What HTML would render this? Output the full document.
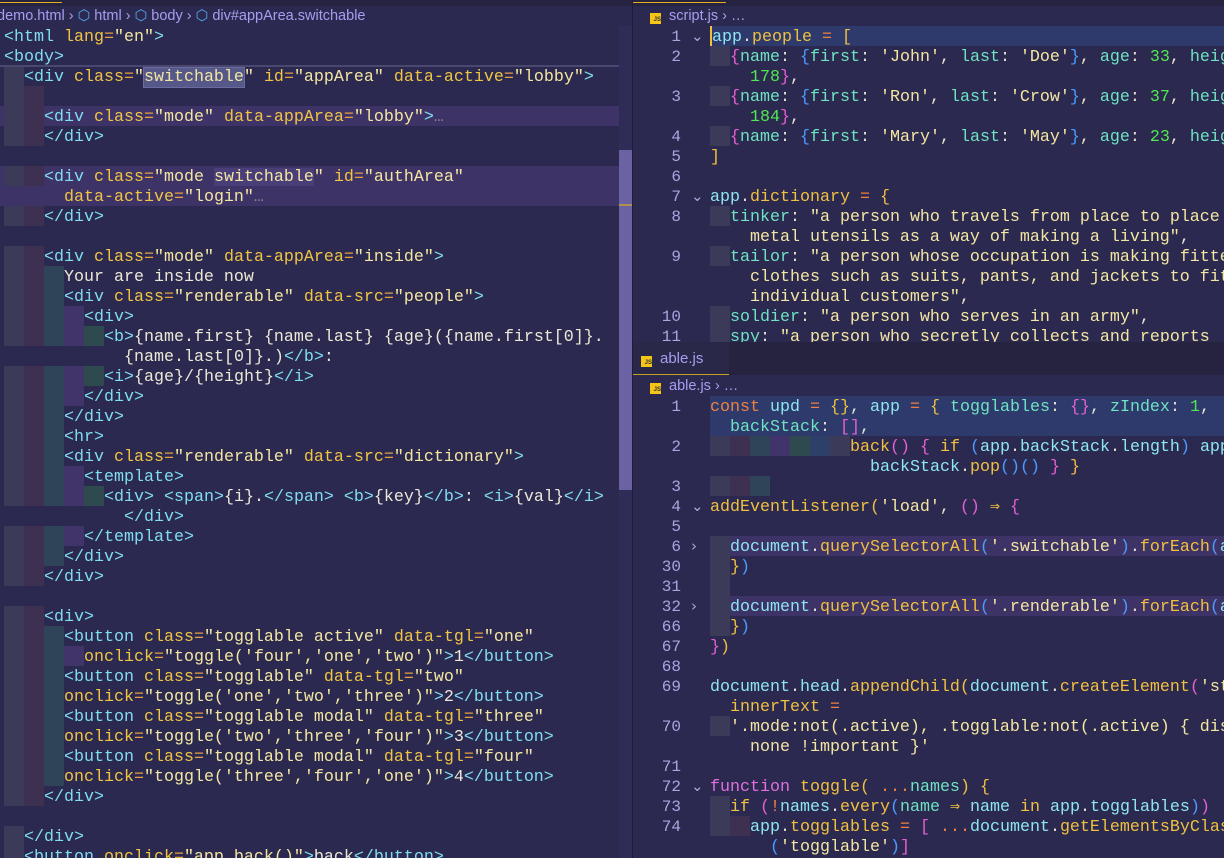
<!DOCTYPE html>
<html><head><meta charset="utf-8">
<style>
*{margin:0;padding:0;box-sizing:border-box}
body{width:1224px;height:858px;overflow:hidden;background:#2b2950;position:relative;font-family:"Liberation Mono",monospace;font-size:16.67px;color:#e8e4d0}
.pane{position:absolute;overflow:hidden}
.l{position:absolute;left:0;height:20px;line-height:23px;white-space:pre;width:2000px}
.g{display:inline-block;width:20px;height:20px;vertical-align:top}
.g1{background:#3b3a58}.g2{background:#3e3050}.g3{background:#2f4458}.g4{background:#40346a}.g5{background:#2e4a4e}.g6{background:#2e3f6a}
.hp{background:#3e3366}.hb{background:#2d3a6b}
.t{color:#80def0}.a{color:#f0c544}.s{color:#f3e6a2}.e{color:#e8a040}.w{color:#ece8d6}
.v{color:#8ee6f0}.k{color:#6fe3c2}.f{color:#f0c040}.p{color:#e65fd0}.bl{color:#4a9cff}.y{color:#f0c040}.n{color:#52e852}.o{color:#f08040}.q{color:#f3e6a2}.pk{color:#e070e0}
.crumb{position:absolute;font-family:"Liberation Sans",sans-serif;font-size:14.5px;color:#a89ef0;white-space:pre;line-height:20px}
.num{position:absolute;left:633px;width:48px;text-align:right;color:#a9a6e0;font-size:16px;line-height:23px}
.chev{position:absolute;left:691px;color:#a9a6e0;font-size:15px;line-height:20px;font-family:"DejaVu Sans",sans-serif}
.js{display:inline-block;width:11px;height:11px;background:#f5c518;color:#333;font-size:6px;line-height:14px;text-align:right;font-weight:bold;vertical-align:-1px;margin-right:8px;font-family:"Liberation Sans",sans-serif}
</style></head><body>

<!-- LEFT PANE -->
<div style="position:absolute;left:0;top:0;width:633px;height:6px;background:#25233f"></div>
<div style="position:absolute;left:0;top:2px;width:62px;height:1px;background:#e0b020"></div>
<div class="crumb" style="left:-3px;top:6px">demo.html <span style="color:#a89ef0">›</span> <span style="color:#5aa8f0">⬡</span> html › <span style="color:#5aa8f0">⬡</span> body › <span style="color:#5aa8f0">⬡</span> div#appArea.switchable</div>
<div style="position:absolute;left:619px;top:26px;width:14px;height:832px;background:#2f2d57"></div>
<div style="position:absolute;left:619px;top:150px;width:14px;height:340px;background:#6a62a2"></div>
<div style="position:absolute;left:619px;top:204px;width:14px;height:2px;background:#b09050"></div>

<div class="pane" style="left:0;top:26px;width:619px;height:832px">
<div style="position:absolute;top:0;left:4px">
<div class="l" style="top:0"><span class="t">&lt;html</span> <span class="a">lang</span><span class="e">=</span><span class="s">"en"</span><span class="t">&gt;</span></div>
<div class="l" style="top:20px"><span class="t">&lt;body&gt;</span></div>
<div class="l" style="top:40px"><b class="g g1"></b><span class="t">&lt;div</span> <span class="a">class</span><span class="e">=</span><span class="s">"<span style="background:#56588a;outline:1px solid #6a6ca0">switchable</span>"</span> <span class="a">id</span><span class="e">=</span><span class="s">"appArea"</span> <span class="a">data-active</span><span class="e">=</span><span class="s">"lobby"</span><span class="t">&gt;</span></div>
<div class="l" style="top:60px"><b class="g g1"></b><b class="g g2"></b></div>
<div class="l hp" style="top:80px;left:-4px;padding-left:4px"><b class="g g1"></b><b class="g g2"></b><span class="t">&lt;div</span> <span class="a">class</span><span class="e">=</span><span class="s">"mode"</span> <span class="a">data-appArea</span><span class="e">=</span><span class="s">"lobby"</span><span class="t">&gt;</span><span style="color:#888">…</span></div>
<div class="l" style="top:100px"><b class="g g1"></b><b class="g g2"></b><span class="t">&lt;/div&gt;</span></div>
<div class="l hp" style="top:140px;left:-4px;padding-left:4px"><b class="g g1"></b><b class="g g2"></b><span class="t">&lt;div</span> <span class="a">class</span><span class="e">=</span><span class="s">"mode <span style="background:#4a3e78">switchable</span>"</span> <span class="a">id</span><span class="e">=</span><span class="s">"authArea"</span></div>
<div class="l hp" style="top:160px;left:-4px;padding-left:64px"><span class="a">data-active</span><span class="e">=</span><span class="s">"login"</span><span style="color:#888">…</span></div>
<div class="l" style="top:180px"><b class="g g1"></b><b class="g g2"></b><span class="t">&lt;/div&gt;</span></div>
<div class="l" style="top:220px"><b class="g g1"></b><b class="g g2"></b><span class="t">&lt;div</span> <span class="a">class</span><span class="e">=</span><span class="s">"mode"</span> <span class="a">data-appArea</span><span class="e">=</span><span class="s">"inside"</span><span class="t">&gt;</span></div>
<div class="l" style="top:240px"><b class="g g1"></b><b class="g g2"></b><b class="g g3"></b><span class="w">Your are inside now</span></div>
<div class="l" style="top:260px"><b class="g g1"></b><b class="g g2"></b><b class="g g3"></b><span class="t">&lt;div</span> <span class="a">class</span><span class="e">=</span><span class="s">"renderable"</span> <span class="a">data-src</span><span class="e">=</span><span class="s">"people"</span><span class="t">&gt;</span></div>
<div class="l" style="top:280px"><b class="g g1"></b><b class="g g2"></b><b class="g g3"></b><b class="g g4"></b><span class="t">&lt;div&gt;</span></div>
<div class="l" style="top:300px"><b class="g g1"></b><b class="g g2"></b><b class="g g3"></b><b class="g g4"></b><b class="g g5"></b><span class="t">&lt;b&gt;</span><span class="w">{name.first} {name.last} {age}({name.first[0]}.</span></div>
<div class="l" style="top:320px;padding-left:120px"><span class="w">{name.last[0]}.)</span><span class="t">&lt;/b&gt;</span><span class="w">:</span></div>
<div class="l" style="top:340px"><b class="g g1"></b><b class="g g2"></b><b class="g g3"></b><b class="g g4"></b><b class="g g5"></b><span class="t">&lt;i&gt;</span><span class="w">{age}/{height}</span><span class="t">&lt;/i&gt;</span></div>
<div class="l" style="top:360px"><b class="g g1"></b><b class="g g2"></b><b class="g g3"></b><b class="g g4"></b><span class="t">&lt;/div&gt;</span></div>
<div class="l" style="top:380px"><b class="g g1"></b><b class="g g2"></b><b class="g g3"></b><span class="t">&lt;/div&gt;</span></div>
<div class="l" style="top:400px"><b class="g g1"></b><b class="g g2"></b><b class="g g3"></b><span class="t">&lt;hr&gt;</span></div>
<div class="l" style="top:420px"><b class="g g1"></b><b class="g g2"></b><b class="g g3"></b><span class="t">&lt;div</span> <span class="a">class</span><span class="e">=</span><span class="s">"renderable"</span> <span class="a">data-src</span><span class="e">=</span><span class="s">"dictionary"</span><span class="t">&gt;</span></div>
<div class="l" style="top:440px"><b class="g g1"></b><b class="g g2"></b><b class="g g3"></b><b class="g g4"></b><span class="t">&lt;template&gt;</span></div>
<div class="l" style="top:460px"><b class="g g1"></b><b class="g g2"></b><b class="g g3"></b><b class="g g4"></b><b class="g g5"></b><span class="t">&lt;div&gt;</span> <span class="t">&lt;span&gt;</span><span class="w">{i}.</span><span class="t">&lt;/span&gt;</span> <span class="t">&lt;b&gt;</span><span class="w">{key}</span><span class="t">&lt;/b&gt;</span><span class="w">:</span> <span class="t">&lt;i&gt;</span><span class="w">{val}</span><span class="t">&lt;/i&gt;</span></div>
<div class="l" style="top:480px;padding-left:120px"><span class="t">&lt;/div&gt;</span></div>
<div class="l" style="top:500px"><b class="g g1"></b><b class="g g2"></b><b class="g g3"></b><b class="g g4"></b><span class="t">&lt;/template&gt;</span></div>
<div class="l" style="top:520px"><b class="g g1"></b><b class="g g2"></b><b class="g g3"></b><span class="t">&lt;/div&gt;</span></div>
<div class="l" style="top:540px"><b class="g g1"></b><b class="g g2"></b><span class="t">&lt;/div&gt;</span></div>
<div class="l" style="top:580px"><b class="g g1"></b><b class="g g2"></b><span class="t">&lt;div&gt;</span></div>
<div class="l" style="top:600px"><b class="g g1"></b><b class="g g2"></b><b class="g g3"></b><span class="t">&lt;button</span> <span class="a">class</span><span class="e">=</span><span class="s">"togglable active"</span> <span class="a">data-tgl</span><span class="e">=</span><span class="s">"one"</span></div>
<div class="l" style="top:620px"><b class="g g1"></b><b class="g g2"></b><b class="g g3"></b><b class="g g4"></b><span class="a">onclick</span><span class="e">=</span><span class="s">"toggle('four','one','two')"</span><span class="t">&gt;</span><span class="w">1</span><span class="t">&lt;/button&gt;</span></div>
<div class="l" style="top:640px"><b class="g g1"></b><b class="g g2"></b><b class="g g3"></b><span class="t">&lt;button</span> <span class="a">class</span><span class="e">=</span><span class="s">"togglable"</span> <span class="a">data-tgl</span><span class="e">=</span><span class="s">"two"</span></div>
<div class="l" style="top:660px"><b class="g g1"></b><b class="g g2"></b><b class="g g3"></b><span class="a">onclick</span><span class="e">=</span><span class="s">"toggle('one','two','three')"</span><span class="t">&gt;</span><span class="w">2</span><span class="t">&lt;/button&gt;</span></div>
<div class="l" style="top:680px"><b class="g g1"></b><b class="g g2"></b><b class="g g3"></b><span class="t">&lt;button</span> <span class="a">class</span><span class="e">=</span><span class="s">"togglable modal"</span> <span class="a">data-tgl</span><span class="e">=</span><span class="s">"three"</span></div>
<div class="l" style="top:700px"><b class="g g1"></b><b class="g g2"></b><b class="g g3"></b><span class="a">onclick</span><span class="e">=</span><span class="s">"toggle('two','three','four')"</span><span class="t">&gt;</span><span class="w">3</span><span class="t">&lt;/button&gt;</span></div>
<div class="l" style="top:720px"><b class="g g1"></b><b class="g g2"></b><b class="g g3"></b><span class="t">&lt;button</span> <span class="a">class</span><span class="e">=</span><span class="s">"togglable modal"</span> <span class="a">data-tgl</span><span class="e">=</span><span class="s">"four"</span></div>
<div class="l" style="top:740px"><b class="g g1"></b><b class="g g2"></b><b class="g g3"></b><span class="a">onclick</span><span class="e">=</span><span class="s">"toggle('three','four','one')"</span><span class="t">&gt;</span><span class="w">4</span><span class="t">&lt;/button&gt;</span></div>
<div class="l" style="top:760px"><b class="g g1"></b><b class="g g2"></b><span class="t">&lt;/div&gt;</span></div>
<div class="l" style="top:800px"><b class="g g1"></b><span class="t">&lt;/div&gt;</span></div>
<div class="l" style="top:820px"><b class="g g1"></b><span class="t">&lt;button</span> <span class="a">onclick</span><span class="e">=</span><span class="s">"app.back()"</span><span class="t">&gt;</span><span class="w">back</span><span class="t">&lt;/button&gt;</span></div>
</div>
<div style="position:absolute;left:0;top:39px;width:619px;height:2px;background:#4a4870"></div>
</div>

<!-- RIGHT DIVIDER -->
<div style="position:absolute;left:632px;top:0;width:1px;height:858px;background:#1e1c38"></div>

<!-- RIGHT TOP -->
<div style="position:absolute;left:633px;top:0;width:591px;height:6px;background:#25233f"></div>
<div style="position:absolute;left:633px;top:2px;width:93px;height:1px;background:#e0b020"></div>
<div class="crumb" style="left:650px;top:6px"><span class="js">JS</span>script.js › …</div>
<div class="pane" style="left:633px;top:26px;width:591px;height:316px">
<div style="position:absolute;left:-633px;top:-26px;width:1224px;height:400px">
<div class="num" style="top:26px">1</div><div class="chev" style="top:26px">⌄</div>
<div class="num" style="top:46px">2</div><div class="num" style="top:86px">3</div><div class="num" style="top:126px">4</div><div class="num" style="top:146px">5</div><div class="num" style="top:166px">6</div>
<div class="num" style="top:186px">7</div><div class="chev" style="top:186px">⌄</div>
<div class="num" style="top:206px">8</div><div class="num" style="top:246px">9</div><div class="num" style="top:306px">10</div><div class="num" style="top:326px">11</div>
<div class="l hb" style="top:26px;left:710px;border-left:2px solid #f0c040"><span class="v">app</span>.<span class="f">people</span> <span class="o">=</span> <span class="y">[</span></div>
<div class="l" style="top:46px;left:710px"><b class="g g1"></b><span class="p">{</span><span class="k">name</span>: <span class="bl">{</span><span class="k">first</span>: <span class="q">'John'</span>, <span class="k">last</span>: <span class="q">'Doe'</span><span class="bl">}</span>, <span class="k">age</span>: <span class="n">33</span>, <span class="k">height</span>:</div>
<div class="l" style="top:66px;left:750px"><span class="n">178</span><span class="p">}</span>,</div>
<div class="l" style="top:86px;left:710px"><b class="g g1"></b><span class="p">{</span><span class="k">name</span>: <span class="bl">{</span><span class="k">first</span>: <span class="q">'Ron'</span>, <span class="k">last</span>: <span class="q">'Crow'</span><span class="bl">}</span>, <span class="k">age</span>: <span class="n">37</span>, <span class="k">height</span>:</div>
<div class="l" style="top:106px;left:750px"><span class="n">184</span><span class="p">}</span>,</div>
<div class="l" style="top:126px;left:710px"><b class="g g1"></b><span class="p">{</span><span class="k">name</span>: <span class="bl">{</span><span class="k">first</span>: <span class="q">'Mary'</span>, <span class="k">last</span>: <span class="q">'May'</span><span class="bl">}</span>, <span class="k">age</span>: <span class="n">23</span>, <span class="k">height</span>:</div>
<div class="l" style="top:146px;left:710px"><span class="y">]</span></div>
<div class="l" style="top:186px;left:710px"><span class="v">app</span>.<span class="f">dictionary</span> <span class="o">=</span> <span class="y">{</span></div>
<div class="l" style="top:206px;left:710px"><b class="g g1"></b><span class="k">tinker</span>: <span class="q">"a person who travels from place to place</span></div>
<div class="l" style="top:226px;left:750px"><span class="q">metal utensils as a way of making a living"</span>,</div>
<div class="l" style="top:246px;left:710px"><b class="g g1"></b><span class="k">tailor</span>: <span class="q">"a person whose occupation is making fitted</span></div>
<div class="l" style="top:266px;left:750px"><span class="q">clothes such as suits, pants, and jackets to fit</span></div>
<div class="l" style="top:286px;left:750px"><span class="q">individual customers"</span>,</div>
<div class="l" style="top:306px;left:710px"><b class="g g1"></b><span class="k">soldier</span>: <span class="q">"a person who serves in an army"</span>,</div>
<div class="l" style="top:326px;left:710px"><b class="g g1"></b><span class="k">spy</span>: <span class="q">"a person who secretly collects and reports</span></div>
</div>
</div>

<!-- TAB BAR -->
<div style="position:absolute;left:633px;top:342px;width:591px;height:33px;background:#25233f"></div>
<div style="position:absolute;left:633px;top:342px;width:96px;height:32px;background:#2a2848"></div>
<div style="position:absolute;left:633px;top:374px;width:96px;height:1px;background:#c8a020"></div>
<div class="crumb" style="left:641px;top:349px;font-size:15px"><span class="js">JS</span>able.js</div>

<!-- RIGHT BOTTOM -->
<div class="crumb" style="left:650px;top:376px"><span class="js">JS</span>able.js › …</div>
<div class="pane" style="left:633px;top:396px;width:591px;height:462px">
<div style="position:absolute;left:-633px;top:-396px;width:1224px;height:900px">
<div class="num" style="top:396px">1</div><div class="num" style="top:436px">2</div><div class="num" style="top:476px">3</div>
<div class="num" style="top:496px">4</div><div class="chev" style="top:496px">⌄</div>
<div class="num" style="top:516px">5</div>
<div class="num" style="top:536px">6</div><div class="chev" style="top:536px">›</div>
<div class="num" style="top:556px">30</div><div class="num" style="top:576px">31</div>
<div class="num" style="top:596px">32</div><div class="chev" style="top:596px">›</div>
<div class="num" style="top:616px">66</div><div class="num" style="top:636px">67</div><div class="num" style="top:656px">68</div><div class="num" style="top:676px">69</div><div class="num" style="top:716px">70</div><div class="num" style="top:756px">71</div>
<div class="num" style="top:776px">72</div><div class="chev" style="top:776px">⌄</div>
<div class="num" style="top:796px">73</div><div class="num" style="top:816px">74</div>

<div class="l hb" style="top:396px;left:710px"><span class="o">const</span> <span class="v">upd</span> <span class="o">=</span> <span class="y">{}</span>, <span class="v">app</span> <span class="o">=</span> <span class="y">{</span> <span class="k">togglables</span>: <span class="p">{}</span>, <span class="k">zIndex</span>: <span class="n">1</span>,</div>
<div class="l hb" style="top:416px;left:710px;padding-left:20px"><span class="k">backStack</span>: <span class="p">[]</span>,</div>
<div class="l" style="top:436px;left:710px"><b class="g g1"></b><b class="g g2"></b><b class="g g3"></b><b class="g g4"></b><b class="g g5"></b><b class="g g6"></b><b class="g g1"></b><span class="f">back</span><span class="p">()</span> <span class="p">{</span> <span class="y">if</span> <span class="bl">(</span><span class="v">app</span>.<span class="v">backStack</span>.<span class="v">length</span><span class="bl">)</span> <span class="v">app</span>.</div>
<div class="l" style="top:456px;left:870px"><span class="v">backStack</span>.<span class="f">pop</span><span class="bl">()()</span> <span class="p">}</span> <span class="y">}</span></div>
<div class="l" style="top:476px;left:710px"><b class="g g1"></b><b class="g g2"></b><b class="g g3"></b></div>
<div class="l" style="top:496px;left:710px"><span class="f">addEventListener</span><span class="y">(</span><span class="q">'load'</span>, <span class="p">()</span> <span class="y">⇒</span> <span class="p">{</span></div>
<div class="l hp" style="top:536px;left:710px"><b class="g g1"></b><span class="v">document</span>.<span class="f">querySelectorAll</span><span class="bl">(</span><span class="q">'.switchable'</span><span class="bl">)</span>.<span class="f">forEach</span><span class="bl">(</span><span class="v">a</span></div>
<div class="l" style="top:556px;left:710px"><b class="g g1"></b><span class="y">}</span><span class="bl">)</span></div>
<div class="l" style="top:576px;left:710px"><b class="g g1"></b></div>
<div class="l hp" style="top:596px;left:710px"><b class="g g1"></b><span class="v">document</span>.<span class="f">querySelectorAll</span><span class="bl">(</span><span class="q">'.renderable'</span><span class="bl">)</span>.<span class="f">forEach</span><span class="bl">(</span><span class="v">a</span></div>
<div class="l" style="top:616px;left:710px"><b class="g g1"></b><span class="y">}</span><span class="bl">)</span></div>
<div class="l" style="top:636px;left:710px"><span class="p">}</span><span class="y">)</span></div>
<div class="l" style="top:676px;left:710px"><span class="v">document</span>.<span class="v">head</span>.<span class="f">appendChild</span><span class="y">(</span><span class="v">document</span>.<span class="f">createElement</span><span class="p">(</span><span class="q">'style'</span></div>
<div class="l" style="top:696px;left:730px"><span class="f">innerText</span> <span class="o">=</span></div>
<div class="l" style="top:716px;left:710px"><b class="g g1"></b><span class="q">'.mode:not(.active), .togglable:not(.active) { display:</span></div>
<div class="l" style="top:736px;left:750px"><span class="q">none !important }'</span></div>
<div class="l" style="top:776px;left:710px"><span class="pk">function</span> <span class="f">toggle</span><span class="y">(</span> <span class="o">...</span><span class="k">names</span><span class="y">)</span> <span class="y">{</span></div>
<div class="l" style="top:796px;left:710px"><b class="g g1"></b><span class="y">if</span> <span class="p">(</span><span class="o">!</span><span class="v">names</span>.<span class="f">every</span><span class="bl">(</span><span class="k">name</span> <span class="y">⇒</span> <span class="v">name</span> <span class="y">in</span> <span class="v">app</span>.<span class="v">togglables</span><span class="bl">)</span><span class="p">)</span></div>
<div class="l" style="top:816px;left:710px"><b class="g g1"></b><b class="g g2"></b><span class="v">app</span>.<span class="f">togglables</span> <span class="o">=</span> <span class="p">[</span> <span class="o">...</span><span class="v">document</span>.<span class="f">getElementsByClassName</span></div>
<div class="l" style="top:836px;left:770px"><span class="bl">(</span><span class="q">'togglable'</span><span class="bl">)</span><span class="p">]</span></div>
</div>
</div>
</body></html>
